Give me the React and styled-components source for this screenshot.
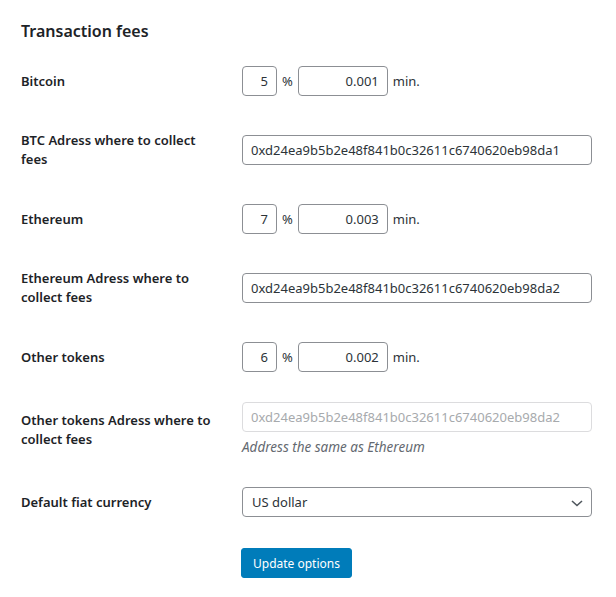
import React from "react";
import styled, { createGlobalStyle } from "styled-components";

const Global = createGlobalStyle`
  html, body { margin: 0; padding: 0; background: #fff; }
  body { font-family: "Noto Sans", "Open Sans", sans-serif; color: #1d2327; }
  * { box-sizing: border-box; }
`;

const Page = styled.div`
  padding: 19px 24px 18px 21px;
  background: #fff;
`;

const Heading = styled.h2`
  margin: 0 0 8px;
  font-size: 16px;
  line-height: 24px;
  font-weight: 600;
  color: #1d2327;
`;

const Row = styled.div`
  display: grid;
  grid-template-columns: 221px 350px;
  align-items: center;
`;

const Label = styled.div`
  padding: 20px 21px 20px 0;
  font-size: 13px;
  line-height: 19px;
  font-weight: 600;
  color: #1d2327;
`;

const Field = styled.div`
  padding: 15px 0;
  display: flex;
  flex-direction: column;
`;

const Inline = styled.div`
  display: flex;
  align-items: center;
  gap: 5px;
`;

const Input = styled.input`
  width: ${(p) => p.$w || 350}px;
  height: 30px;
  padding: 0 8px;
  border: 1px solid ${(p) => (p.disabled ? "#dcdcde" : "#8c8f94")};
  border-radius: 4px;
  background: #fff;
  font-family: inherit;
  font-size: 13px;
  color: ${(p) => (p.disabled ? "#a7aaad" : "#2c3338")};
  text-align: ${(p) => (p.$right ? "right" : "left")};
  outline: none;
  margin: 0;
`;

const Unit = styled.span`
  font-size: 13px;
  line-height: 19px;
  color: #2c3338;
`;

const Description = styled.p`
  margin: 6px 0 0;
  font-size: 13.5px;
  line-height: 19px;
  font-style: italic;
  color: #646970;
`;

const SelectBox = styled.div`
  position: relative;
  width: 350px;
  height: 30px;
  border: 1px solid #8c8f94;
  border-radius: 4px;
  display: flex;
  align-items: center;
  padding: 0 24px 0 9px;
  font-size: 13px;
  color: #2c3338;
`;

const Chevron = styled.svg`
  position: absolute;
  right: 8px;
  top: 12px;
`;

const Submit = styled.div`
  padding: 16px 0 0 220px;
`;

const Button = styled.button`
  height: 30px;
  padding: 0 11px;
  background: #007cba;
  border: 1px solid #007cba;
  border-radius: 3px;
  color: #fff;
  font-family: inherit;
  font-size: 12px;
  cursor: pointer;
`;

function FeeRow({ label, pct, min }) {
  return (
    <Row>
      <Label>{label}</Label>
      <Field>
        <Inline>
          <Input $w={35} $right defaultValue={pct} />
          <Unit>%</Unit>
          <Input $w={90} $right defaultValue={min} />
          <Unit>min.</Unit>
        </Inline>
      </Field>
    </Row>
  );
}

function AddrRow({ label, value, disabled, desc }) {
  return (
    <Row>
      <Label>{label}</Label>
      <Field>
        <Input defaultValue={value} disabled={disabled} />
        {desc && <Description>{desc}</Description>}
      </Field>
    </Row>
  );
}

export default function App() {
  return (
    <>
      <Global />
      <Page>
        <Heading>Transaction fees</Heading>
        <FeeRow label="Bitcoin" pct="5" min="0.001" />
        <AddrRow label="BTC Adress where to collect fees" value="0xd24ea9b5b2e48f841b0c32611c6740620eb98da1" />
        <FeeRow label="Ethereum" pct="7" min="0.003" />
        <AddrRow label="Ethereum Adress where to collect fees" value="0xd24ea9b5b2e48f841b0c32611c6740620eb98da2" />
        <FeeRow label="Other tokens" pct="6" min="0.002" />
        <AddrRow
          label="Other tokens Adress where to collect fees"
          value="0xd24ea9b5b2e48f841b0c32611c6740620eb98da2"
          disabled
          desc="Address the same as Ethereum"
        />
        <Row>
          <Label>Default fiat currency</Label>
          <Field>
            <SelectBox>
              US dollar
              <Chevron width="12" height="7" viewBox="0 0 12 7">
                <polyline points="1,1 6,5.5 11,1" fill="none" stroke="#50575e" strokeWidth="1.6" />
              </Chevron>
            </SelectBox>
          </Field>
        </Row>
        <Submit>
          <Button>Update options</Button>
        </Submit>
      </Page>
    </>
  );
}
